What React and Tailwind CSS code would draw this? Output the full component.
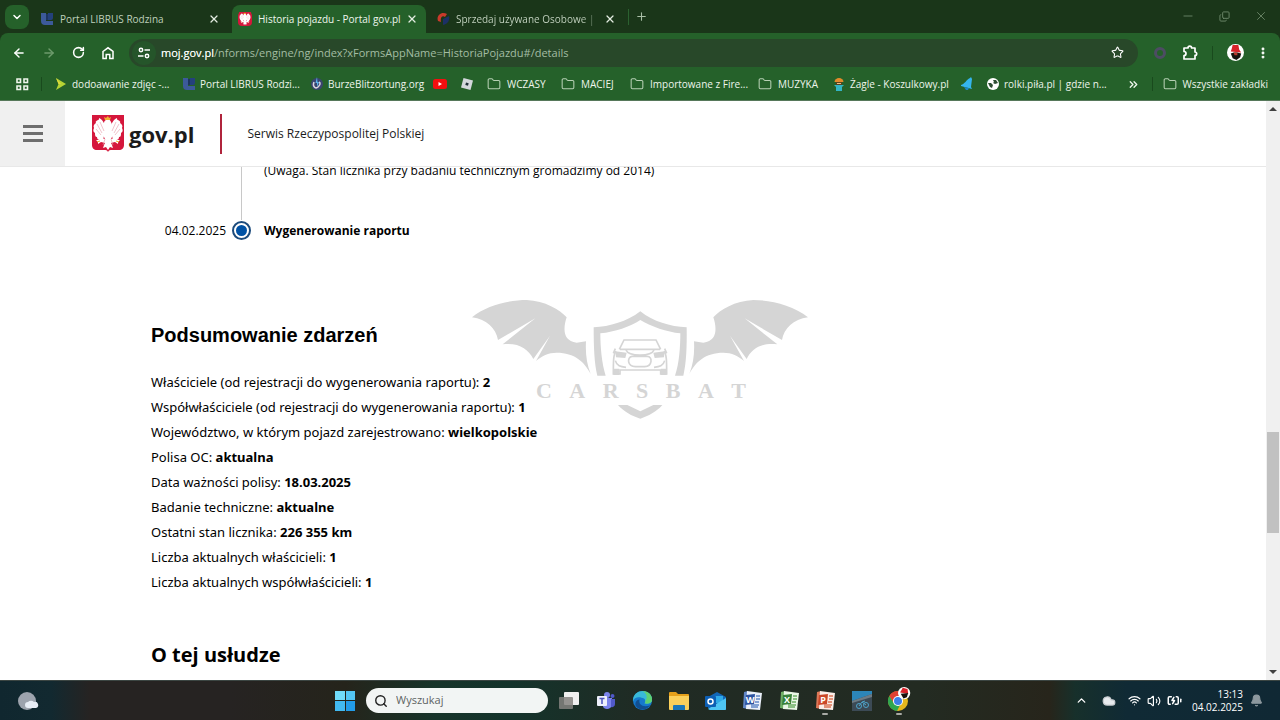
import React from 'react';
import {
  ArrowLeft,
  ArrowRight,
  BatteryCharging,
  Bell,
  ChevronDown,
  ChevronUp,
  ChevronsRight,
  Cloud,
  Copy,
  EllipsisVertical,
  Folder,
  Minus,
  Plus,
  RotateCw,
  Search,
  Star,
  Volume2,
  Wifi,
  X,
} from 'lucide-react';

const SUMMARY = [
  { label: 'Właściciele (od rejestracji do wygenerowania raportu):', value: '2' },
  { label: 'Współwłaściciele (od rejestracji do wygenerowania raportu):', value: '1' },
  { label: 'Województwo, w którym pojazd zarejestrowano:', value: 'wielkopolskie' },
  { label: 'Polisa OC:', value: 'aktualna' },
  { label: 'Data ważności polisy:', value: '18.03.2025' },
  { label: 'Badanie techniczne:', value: 'aktualne' },
  { label: 'Ostatni stan licznika:', value: '226 355 km' },
  { label: 'Liczba aktualnych właścicieli:', value: '1' },
  { label: 'Liczba aktualnych współwłaścicieli:', value: '1' },
];

function LibrusIcon({ className }) {
  return (
    <svg viewBox="0 0 14 14" className={className} aria-hidden="true">
      <path d="M1 1h5v8h7v4H5a4 4 0 0 1-4-4z" fill="#3c5a9a" />
      <path d="M8 1h5v5a2 2 0 0 1-2 2H8z" fill="#24417c" />
      <path d="M6 2h2v6H6z" fill="#1d3560" />
    </svg>
  );
}

function EagleWing() {
  return (
    <path d="M14 14c-1-5-3-9-7-11 0 1 0 2-1 2-1 1-3 1-2 3-2 1-3 3-2 5-1 2-1 4 1 5 0 2 0 4 2 4 0 2 1 3 3 3 0 1 2 2 3 0l1-4 2-3z" />
  );
}

function Eagle({ className }) {
  return (
    <svg viewBox="0 0 32 37" className={className} aria-hidden="true">
      <path d="M0 0h32v30c0 3-2 5-5 5h-7c-2 0-3 0-4 2-1-2-2-2-4-2H5c-3 0-5-2-5-5z" fill="#d5173c" />
      <g fill="#fff">
        <EagleWing />
        <g transform="translate(32 0) scale(-1 1)"><EagleWing /></g>
        <path d="M12 8c0-4 6-5 7-1 1 2 1 4 2 7v6l-2 4 5-1 1 2 3 0-2 2 0 2-3-2-4 1 1 2 1 3-3-1-2 3-2-3-3 1 1-3 1-2-4-1-3 2 0-2-2-2 3 0 1-2 5 1-2-4v-6c1-2 1-4 0-6z" />
      </g>
      <path d="M13 5l-1-3 2 1 2-2 1 2 2-1-1 3z" fill="#f0b233" />
      <path d="M5 9l5 9M4 14l5 6M8 7l4 9M27 9l-5 9M28 14l-5 6M24 7l-4 9M13 24l-2 6M19 24l2 6" stroke="#e69aa8" strokeWidth=".6" fill="none" />
      <path d="M5 27l3-1M27 27l-3-1" stroke="#f0b233" strokeWidth="1" />
    </svg>
  );
}

function DialIcon() {
  return (
    <svg viewBox="0 0 14 14" className="size-3.5 shrink-0" aria-hidden="true">
      <path d="M2 9C0 4 5-1 11 2L9 5C6 3 4 6 5 10z" fill="#c93a2b" />
      <path d="M7 7l6-3c1 4-1 8-6 9z" fill="#1c3065" />
    </svg>
  );
}

function Tab({ icon, title, active, faded }) {
  return (
    <div
      className={
        active
          ? 'mr-1 flex h-7 w-[194px] items-center gap-1.5 rounded-t-lg bg-[#25612a] pl-1.5 text-[#eef5ec]'
          : 'flex h-7 w-[198px] items-center gap-1.5 pl-1.5 text-[#bfd0bc]'
      }
    >
      {icon}
      <span
        className={
          faded
            ? 'w-[140px] whitespace-nowrap bg-linear-to-r from-[#c9d8c6] from-90% to-[#4d684b] bg-clip-text text-transparent'
            : 'w-[140px] whitespace-nowrap'
        }
      >
        {title}
      </span>
      <button type="button" aria-label="Zamknij kartę" className="ml-0.5 text-[#e3ece1]">
        <X size={12} strokeWidth={2.5} />
      </button>
    </div>
  );
}

function TabStrip() {
  return (
    <div className="flex h-[33px] items-end bg-[#1a3619] pl-[5px] text-[10px]">
      <button type="button" aria-label="Wyszukaj karty" className="mb-1 mr-[5px] flex size-6 items-center justify-center rounded-lg bg-[#25612a] text-white">
        <ChevronDown size={12} strokeWidth={3} />
      </button>
      <Tab icon={<LibrusIcon className="size-3.5 shrink-0" />} title="Portal LIBRUS Rodzina" />
      <Tab
        active
        icon={
          <span className="flex size-3.5 shrink-0 items-center justify-center rounded-sm bg-[#d5173c]">
            <Eagle className="size-3.5" />
          </span>
        }
        title="Historia pojazdu - Portal gov.pl"
      />
      <Tab faded icon={<DialIcon />} title="Sprzedaj używane Osobowe | O" />
      <div className="mb-2 h-4 w-px bg-[#2b6130]" />
      <button type="button" aria-label="Nowa karta" className="mb-2.5 ml-1.5 text-[#a9bfa6]">
        <Plus size={13} />
      </button>
      <div className="mb-2.5 ml-auto mr-3 flex gap-6 text-[#6f8a6c]">
        <button type="button" aria-label="Minimalizuj"><Minus size={14} strokeWidth={1.5} /></button>
        <button type="button" aria-label="Przywróć"><Copy size={11} strokeWidth={2} className="-scale-y-100" /></button>
        <button type="button" aria-label="Zamknij"><X size={14} strokeWidth={1.5} /></button>
      </div>
    </div>
  );
}

function Toolbar() {
  return (
    <div className="flex h-[39px] items-center rounded-t-lg bg-[#25612a] pl-3 pr-2.5 text-white">
      <div className="flex items-center gap-4">
        <button type="button" aria-label="Wstecz"><ArrowLeft size={14} strokeWidth={2.5} /></button>
        <button type="button" aria-label="Dalej" className="text-[#6d9b6c]"><ArrowRight size={14} strokeWidth={2.5} /></button>
        <button type="button" aria-label="Odśwież"><RotateCw size={13} strokeWidth={2.8} /></button>
        <button type="button" aria-label="Strona główna">
          <svg viewBox="0 0 14 14" className="size-3.5" fill="none" stroke="currentColor" strokeWidth="1.5">
            <path d="M2 5.500L7 1.800l5 3.700v7H8.800V8.500H5.200v4H2z" />
          </svg>
        </button>
      </div>
      <div className="ml-3.5 flex h-7 flex-1 items-center rounded-full bg-[#284829] pl-[3px] pr-3.5">
        <button type="button" aria-label="Informacje o witrynie" className="flex size-6 items-center justify-center rounded-full bg-[#25552a]">
          <svg viewBox="0 0 14 14" className="size-3.5" fill="none" stroke="currentColor" strokeWidth="1.5">
            <circle cx="4" cy="4" r="1.700" />
            <path d="M7.500 4H13M1 10h5.500" />
            <circle cx="10" cy="10" r="1.700" />
          </svg>
        </button>
        <div className="relative ml-[5px] flex-1 text-[11px] leading-5">
          <input
            aria-label="Adres"
            defaultValue="moj.gov.pl/nforms/engine/ng/index?xFormsAppName=HistoriaPojazdu#/details"
            className="block w-full bg-transparent text-[#a3bda3] outline-none"
          />
          <span aria-hidden="true" className="pointer-events-none absolute left-0 top-0 text-white">moj.gov.pl</span>
        </div>
        <button type="button" aria-label="Dodaj zakładkę"><Star size={13} /></button>
      </div>
      <div className="ml-4 flex items-center">
        <button type="button" aria-label="Rozszerzenie" className="size-3 rounded-full border-3 border-[#4d4c63]" />
        <button type="button" aria-label="Rozszerzenia" className="ml-4">
          <svg viewBox="0 0 16 16" className="size-4" fill="none" stroke="currentColor" strokeWidth="1.700" strokeLinejoin="round">
            <path d="M2 3h4a1.800 1.800 0 0 1 3.600 0H13v4a1.700 1.700 0 0 1 0 3.400V14H2v-3.500a2 2 0 0 0 0-4z" />
          </svg>
        </button>
        <div className="ml-3.5 h-3.5 w-px bg-[#194a1d]" />
        <button type="button" aria-label="Profil" className="ml-3.5">
          <Avatar className="size-[17px]" />
        </button>
        <button type="button" aria-label="Menu" className="ml-3"><EllipsisVertical size={14} strokeWidth={3} /></button>
      </div>
    </div>
  );
}

function Avatar({ className }) {
  return (
    <svg viewBox="0 0 18 18" className={className} aria-hidden="true">
      <circle cx="9" cy="9" r="9" fill="#fff" />
      <path d="M4 8l1-3 1-4 6 0 1 5 2 3z" fill="#d8222a" />
      <path d="M4 10l3-1h4l4 1-1 4-4 3-4-2z" fill="#16120f" />
      <path d="M7 9h4v3H8z" fill="#b5372b" />
    </svg>
  );
}

function FolderLink({ label, className }) {
  return (
    <a href="#" className={className}>
      <Folder size={14} strokeWidth={1.8} className="shrink-0 text-[#b7d0b4]" />
      {label}
    </a>
  );
}

function Bookmarks() {
  return (
    <nav aria-label="Zakładki" className="flex h-7 items-center whitespace-nowrap bg-[#25612a] pb-1 pl-[15px] pr-3 text-[10px] text-[#eef5ec]">
      <button type="button" aria-label="Aplikacje" className="w-[26px]">
        <svg viewBox="0 0 14 14" className="size-3.5" fill="none" stroke="currentColor" strokeWidth="1.600">
          <path d="M2 2h3.500v3.500H2zM9 2h3.500v3.500H9zM2 9h3.500v3.500H2zM9 9h3.500v3.500H9z" />
        </svg>
      </button>
      <div className="mr-3 h-3.5 w-px bg-[#194a1d]" />
      <a href="#" className="flex w-32 items-center gap-1">
        <svg viewBox="0 0 14 14" className="size-3.5 shrink-0"><path d="M2 1l10 6-10 6 2.500-6z" fill="#b5d334" /><path d="M2 1l5 6H4.500z" fill="#e1d93c" /></svg>
        dodoawanie zdjęc -...
      </a>
      <a href="#" className="flex w-32 items-center gap-1">
        <LibrusIcon className="size-3.5 shrink-0" />
        Portal LIBRUS Rodzi...
      </a>
      <a href="#" className="flex w-[123px] items-center gap-1">
        <svg viewBox="0 0 14 14" className="size-3.5 shrink-0">
          <circle cx="7" cy="7" r="6" fill="#3a4470" />
          <path d="M4 5c-2 5 2 7 4 5s3-4 1-5" fill="none" stroke="#d9d3dd" strokeWidth="1.500" />
          <path d="M7 0L5.500 6H7v4l2-5H7.500z" fill="#5cb2e8" />
        </svg>
        BurzeBlitzortung.org
      </a>
      <a href="#" aria-label="YouTube" className="w-[27px]">
        <svg viewBox="0 0 14 14" className="size-3.5"><rect y="2" width="14" height="10" rx="2.500" fill="#f40f0f" /><path d="M5.500 5v4L9 7z" fill="#fff" /></svg>
      </a>
      <a href="#" aria-label="Roblox" className="w-[27px]">
        <svg viewBox="0 0 14 14" className="size-3.5"><path d="M3.500 1L13 3.500 10.500 13 1 10.500z" fill="#d3d7dc" /><path d="M6 5.500l2.700.700L8 8.800l-2.700-.700z" fill="#22303a" /></svg>
      </a>
      <FolderLink label="WCZASY" className="flex w-[74px] items-center gap-1.5" />
      <FolderLink label="MACIEJ" className="flex w-[69px] items-center gap-1.5" />
      <FolderLink label="Importowane z Fire..." className="flex w-32 items-center gap-1.5" />
      <FolderLink label="MUZYKA" className="flex w-[74px] items-center gap-1.5" />
      <a href="#" className="flex w-32 items-center gap-1">
        <svg viewBox="0 0 14 14" className="size-3.5 shrink-0">
          <path d="M2.500 5a4.500 4 0 0 1 9 0z" fill="#e38a2c" />
          <path d="M4 5h6v3H4z" fill="#59431f" />
          <path d="M5 6h4v1H5z" fill="#e8c08a" />
          <path d="M2 8h10l-2 2v4H4v-4z" fill="#32b5c4" />
        </svg>
        Żagle - Koszulkowy.pl
      </a>
      <a href="#" aria-label="Powiadomienia" className="w-[26px]">
        <svg viewBox="0 0 14 14" className="size-3.5"><path d="M1 8c4-1 5-5 9-7l1-1 1 2-1 8 1 2L1 9z" fill="#35b5ee" /><path d="M4 10l5 1-1 2H6z" fill="#1c87c4" /></svg>
      </a>
      <a href="#" className="flex items-center gap-1">
        <svg viewBox="0 0 14 14" className="size-3.5 shrink-0">
          <circle cx="7" cy="7" r="6" fill="#fff" />
          <path d="M2 6l3 0 2 2-1 3-2-1zM7 3l3 0 2 3-3 1-2-1 1-1z" fill="#2d4d32" />
        </svg>
        rolki.piła.pl | gdzie n...
      </a>
      <button type="button" aria-label="Więcej zakładek" className="ml-auto"><ChevronsRight size={13} strokeWidth={2.5} /></button>
      <div className="ml-3 mr-2.5 h-3.5 w-px bg-[#194a1d]" />
      <FolderLink label="Wszystkie zakładki" className="flex items-center gap-1.5" />
    </nav>
  );
}

function PageHeader() {
  return (
    <header className="flex h-[66px] shrink-0 items-center border-b border-[#e8e8e8] bg-white">
      <button type="button" aria-label="Menu" className="flex h-full w-[65px] flex-col items-center justify-center gap-1 bg-[#f0f0f0]">
        <span className="h-[3px] w-5 bg-[#6e6e6e]" />
        <span className="h-[3px] w-5 bg-[#6e6e6e]" />
        <span className="h-[3px] w-5 bg-[#6e6e6e]" />
      </button>
      <a href="#" className="ml-[27px] flex items-center gap-[5px]">
        <Eagle className="h-[37px] w-8" />
        <span className="text-[22px] font-bold leading-8">gov.pl</span>
      </a>
      <div className="ml-[26px] h-10 w-0.5 bg-[#b0243c]" />
      <span className="ml-[25px] text-[12px]">Serwis Rzeczypospolitej Polskiej</span>
    </header>
  );
}

function Wing() {
  return (
    <path d="M36 82C80 45 150 30 200 30c55 2 100 30 120 52-10 30-14 70 30 76l28-4c-2 38 2 66 14 98-18-36-48-64-102-64-25 0-45 10-62 25l42-76-50 70c-15-30-44-50-92-44l98-78-112 65c-6-35-34-62-78-68z" />
  );
}

function Watermark() {
  return (
    <div className="pointer-events-none absolute left-1/2 top-[290px] w-[360px] -translate-x-1/2 text-[#d5d5d5]">
      <svg viewBox="0 0 1080 420" className="block w-full" fill="currentColor" aria-hidden="true">
        <Wing />
        <g transform="translate(1080 0) scale(-1 1)"><Wing /></g>
        <path d="M541 64C500 95 450 110 401 112c0 60 2 108 11 145h25c-12-37-16-87-16-127 44-4 89-20 120-40 34 20 79 36 120 40 0 40-3 90-16 127h25c9-37 11-85 10-145-50-2-100-17-139-48z" />
        <path d="M474 345h28l39 19 39-19h27c-17 20-42 33-66 41-26-8-49-21-67-41z" />
        <g fill="none" stroke="currentColor" strokeWidth="5">
          <path d="M478 178l14-28h96l14 28M466 176l-6 14M614 176l6 14M480 178h120M468 184c-8 10-8 30-8 68h20v-12h122v12h18c0-40 0-58-8-68" />
          <path d="M516 199h46c16 0 16 30-8 31h-28c-24 0-26-28-10-31zM466 212c4 16 16 18 32 20M614 212c-4 16-16 18-32 20M498 180c8 20 76 20 84 0" />
        </g>
        <path d="M466 184l34 4-4 16-28-2zM614 184l-34 4 4 16 28-2zM460 236h18v19h-18zM602 236h18v19h-18z" />
      </svg>
      <div className="absolute left-[76px] top-[87px] flex w-[210px] justify-between font-['Liberation_Serif',serif] text-[22px] font-bold leading-7">
        {'CARSBAT'.split('').map((letter, i) => (
          <span key={i}>{letter}</span>
        ))}
      </div>
    </div>
  );
}

function Report() {
  return (
    <main className="min-h-0 flex-1 overflow-hidden pl-[151px] text-black">
      <div className="-mt-[7px] grid grid-cols-[75px_30px_1fr] text-[12px] leading-5">
        <div />
        <div className="mx-auto h-[60px] w-px bg-[#c8c8c8]" />
        <p className="pl-2 pt-px">(Uwaga. Stan licznika przy badaniu technicznym gromadzimy od 2014)</p>
        <time className="-ml-2 pt-px text-right">04.02.2025</time>
        <div className="mx-auto mt-px flex size-[19px] items-center justify-center rounded-full border-2 border-[#1c4b7c]">
          <span className="size-[11px] rounded-full bg-[#0052a5]" />
        </div>
        <p className="pl-2 pt-px font-bold">Wygenerowanie raportu</p>
      </div>
      <h2 className="mt-20 font-['Liberation_Sans',sans-serif] text-[20px] font-bold leading-7">Podsumowanie zdarzeń</h2>
      <ul className="mt-[21px] font-['Noto_Sans',sans-serif] text-[13px] leading-[25px]">
        {SUMMARY.map((item) => (
          <li key={item.label}>
            {item.label} <strong>{item.value}</strong>
          </li>
        ))}
      </ul>
      <h2 className="mt-[46px] text-[20px] font-bold leading-7">O tej usłudze</h2>
    </main>
  );
}

function Scrollbar() {
  return (
    <div className="flex w-3.5 shrink-0 flex-col items-center bg-[#f0f0f0] py-1.5" aria-hidden="true">
      <div className="border-x-4 border-b-4 border-x-transparent border-b-[#404040]" />
      <div className="grow-[7]" />
      <div className="h-[101px] w-3 bg-[#c1c1c1]" />
      <div className="grow-3" />
      <div className="border-x-4 border-t-4 border-x-transparent border-t-[#404040]" />
    </div>
  );
}

function OfficeIcon({ letter, main, light, dark }) {
  return (
    <svg viewBox="0 0 22 22" className="size-[22px]" aria-hidden="true">
      <path d="M3 2l4-1v18l-5-1z" fill={main} />
      <path d="M6 1l15 2-2 17-14-1z" fill={light} />
      <path d="M15 6h4M15 9h4M14 12h4M10 15h8M10 17h7" stroke={main} strokeWidth="1.300" />
      <path d="M5 5l9-1-1 10-9 1z" fill={dark} />
      <text x="9" y="13" textAnchor="middle" fontSize="9" fontWeight="700" fill="#fff">{letter}</text>
    </svg>
  );
}

function AppButton({ label, running, children }) {
  return (
    <button type="button" aria-label={label} className="relative flex h-full flex-1 items-center justify-center">
      {children}
      {running && <span className="absolute bottom-[5px] h-0.5 w-1.5 rounded-full bg-[#a9aaa5]" />}
    </button>
  );
}

function Taskbar() {
  return (
    <footer className="flex h-10 shrink-0 items-center border-t border-[#3b4542] bg-linear-[90deg,#10272f_0%,#122930_4%,#262322_7%,#262322_18%,#25241b_27%,#17342a_34%,#14332b_40%,#202b24_50%,#232b22_72%,#27251b_82%,#17302b_84%,#102a35_88%,#102834_100%] text-white">
      <div className="w-1/4 pl-[17px]">
        <svg viewBox="0 0 22 20" className="h-5 w-[22px]" aria-hidden="true">
          <circle cx="10" cy="10" r="9" fill="#9da3ad" />
          <path d="M11 17a3 3 0 0 1 0-6 4 4 0 0 1 6 0 3 3 0 0 1 2 6z" fill="#e8edf5" />
        </svg>
      </div>
      <button type="button" aria-label="Start" className="ml-[15px] grid size-5 grid-cols-2 gap-px">
        <span className="bg-[#71dcfa]" />
        <span className="bg-[#53c6f4]" />
        <span className="bg-[#42baf1]" />
        <span className="bg-[#229ce8]" />
      </button>
      <label className="ml-[11px] flex h-[25px] w-[182px] items-center gap-2 rounded-full bg-[#f2f5f4] pl-2 text-[#222]">
        <Search size={14} strokeWidth={2.4} className="shrink-0" />
        <input aria-label="Wyszukaj" placeholder="Wyszukaj" className="w-full bg-transparent text-[11px] outline-none placeholder:text-[#5d6362]" />
      </label>
      <div className="ml-[3px] flex h-full w-[366px] items-center">
        <AppButton label="Widok zadań">
          <svg viewBox="0 0 22 22" className="size-[22px]"><rect x="6" y="2" width="15" height="13" rx="1" fill="#f0f0f0" /><rect x="1" y="7" width="14" height="12" rx="1" fill="#85827f" fillOpacity=".85" /></svg>
        </AppButton>
        <AppButton label="Teams">
          <svg viewBox="0 0 20 18" className="h-[18px] w-5">
            <circle cx="11" cy="3" r="3" fill="#7b83eb" /><circle cx="16.500" cy="4" r="2" fill="#5059c9" />
            <path d="M8 6h8v6a5 5 0 0 1-9 3z" fill="#7b83eb" /><path d="M15 7h4v5a3 3 0 0 1-4 3z" fill="#5059c9" />
            <rect x="1" y="4" width="10" height="10" rx="1" fill="#eef0fb" />
            <path d="M3.500 6.500h5M6 6.500V12" stroke="#4b53bc" strokeWidth="1.500" />
          </svg>
        </AppButton>
        <AppButton label="Edge">
          <svg viewBox="0 0 22 22" className="size-[21px]">
            <circle cx="11" cy="11" r="10" fill="#1679cd" />
            <path d="M1 10C2 4 6 1 11 1c6 0 10 4 10 9 0 4-4 5-8 4 2-2 1-6-3-6-4-1-8 0-9 4z" fill="#39b9d8" />
            <path d="M11 1c6 0 10 4 10 9 0 4-4 5-8 4 1-1 1-2 1-3C17 8 15 3 11 1z" fill="#5fd073" />
            <path d="M8 10c-2 5 4 9 11 6-3 5-10 6-14 2-3-3-1-8 3-8z" fill="#114f91" />
          </svg>
        </AppButton>
        <AppButton label="Eksplorator plików">
          <svg viewBox="0 0 22 20" className="h-5 w-[22px]">
            <path d="M1 2q0-1 1-1h6l2 2h10q1 0 1 1v4H1z" fill="#e5a01b" /><path d="M1 5h20v13q0 1-1 1H2q-1 0-1-1z" fill="#fbd05b" />
            <path d="M5 19v-4q0-1 1-1h10q1 0 1 1v4z" fill="#1c77b9" />
          </svg>
        </AppButton>
        <AppButton label="Outlook">
          <svg viewBox="0 0 22 20" className="h-5 w-[22px]">
            <path d="M3 6l9-5 9 5v12q0 1-1 1H5l-2-2z" fill="#1267b8" /><path d="M7 5h11v7H7z" fill="#2faae7" /><path d="M3 18L21 7v11q0 1-1 1H5z" fill="#4ec5f4" />
            <rect y="5" width="11" height="11" rx="1" fill="#0d5fb4" /><circle cx="5.500" cy="10.500" r="2.500" fill="none" stroke="#fff" strokeWidth="1.500" />
          </svg>
        </AppButton>
        <AppButton label="Word"><OfficeIcon letter="W" main="#6186c6" light="#eaf0fa" dark="#2c52a0" /></AppButton>
        <AppButton label="Excel"><OfficeIcon letter="X" main="#6fae65" light="#eaf6e6" dark="#38813a" /></AppButton>
        <AppButton label="PowerPoint" running><OfficeIcon letter="P" main="#dc7757" light="#fbeee8" dark="#cb4728" /></AppButton>
        <AppButton label="Rower">
          <svg viewBox="0 0 20 20" className="size-5">
            <rect width="20" height="20" fill="#3c4a55" /><path d="M0 0h20v3L0 10z" fill="#2c86b9" /><path d="M0 10L20 3v3L0 12z" fill="#6d7b85" />
            <g fill="none" stroke="#4ea3c9"><circle cx="7" cy="15" r="2.500" /><circle cx="14" cy="14" r="2.500" /><path d="M7 15l3-4 4 3M10 11l3-1" /></g>
          </svg>
        </AppButton>
        <AppButton label="Chrome" running>
          <svg viewBox="0 0 24 26" className="-mt-1 h-[26px] w-6">
            <circle cx="11" cy="15" r="10" fill="#e5b71d" />
            <path d="M2.300 10A10 10 0 0 1 19.700 10H11L6.700 17.500z" fill="#df4132" />
            <path d="M2.300 10L7 17.500 13 19l-3 6A10 10 0 0 1 2.300 10z" fill="#2fa650" />
            <circle cx="11" cy="15" r="5" fill="#fff" /><circle cx="11" cy="15" r="4" fill="#3d7fe8" />
            <g transform="translate(11 1) scale(.68)"><circle cx="9" cy="9" r="9" fill="#fff" /><path d="M3 8l4-7 7 2 1 7z" fill="#d8222a" /><path d="M4 10l11-1-2 6-5 2z" fill="#16120f" /></g>
          </svg>
        </AppButton>
      </div>
      <div className="ml-auto flex items-center pr-[17px]">
        <button type="button" aria-label="Ukryte ikony"><ChevronUp size={13} strokeWidth={2.5} /></button>
        <Cloud size={14} className="ml-3.5" fill="#e8ebee" stroke="#c8ccd0" />
        <Wifi size={13} strokeWidth={2.2} className="ml-3" />
        <Volume2 size={14} className="ml-1.5" />
        <BatteryCharging size={15} strokeWidth={2.4} className="ml-1.5" />
        <div className="ml-2.5 text-right text-[10px] leading-[13px]">
          <div>13:13</div>
          <div>04.02.2025</div>
        </div>
        <Bell size={13} fill="#8d989e" stroke="#8d989e" className="ml-[7px]" />
      </div>
    </footer>
  );
}

export default function App() {
  return (
    <div className="relative flex h-screen flex-col overflow-hidden bg-white font-['Open_Sans','Noto_Sans',sans-serif] text-[#1b1b1b]">
      <div className="shrink-0 border-b border-[#56785a] bg-[#1a3619]">
        <TabStrip />
        <Toolbar />
        <Bookmarks />
      </div>
      <div className="flex min-h-0 flex-1">
        <div className="flex min-w-0 flex-1 flex-col">
          <PageHeader />
          <Report />
        </div>
        <Scrollbar />
      </div>
      <Taskbar />
      <Watermark />
    </div>
  );
}
